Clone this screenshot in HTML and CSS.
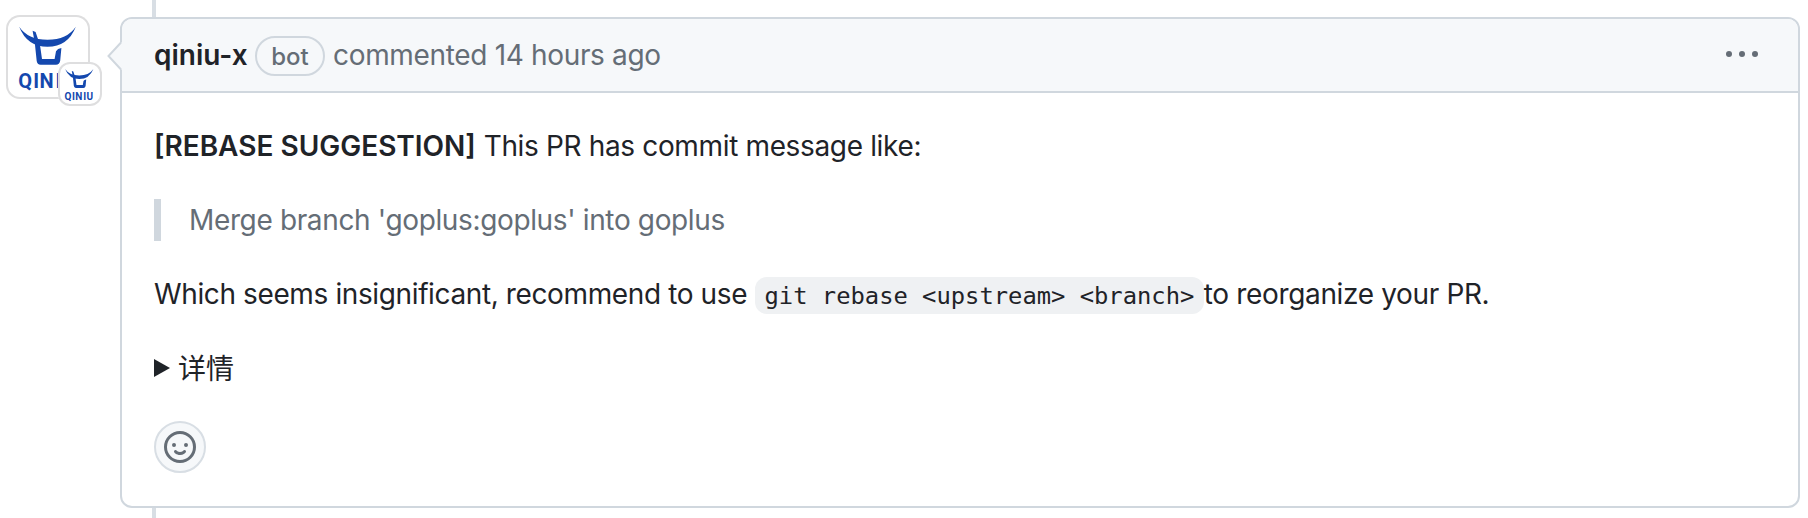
FILE: index.html
```
<!DOCTYPE html>
<html lang="zh-CN">
<head>
<meta charset="utf-8">
<title>qiniu-x commented</title>
<link rel="stylesheet" href="styles.css">
</head>
<body>
<svg class="defs" width="0" height="0">
  <symbol id="logo" viewBox="0 0 84 84">
    <path d="M13.2 11.8 Q22 24.8 41.5 24.8 Q61 24.8 69.8 11.8 Q62 31.8 41.5 31.8 Q21 31.8 13.2 11.8Z"/>
    <path d="M26.6 15.8 L29.6 17 L34 30 L36 44 H48.6 L50 36.2 Q51.5 33.4 55.4 33 L54.2 45.8 Q53.4 49.8 50 49.8 H34.6 Q31.2 49.6 30.7 46 L28.8 28Z"/>
    <text class="logo-text" x="12.2 27.2 33.6 49.4 56.2" y="73">QINIU</text>
  </symbol>
</svg>
<main class="timeline">
  <div class="avatars">
    <svg class="avatar" viewBox="0 0 84 84"><use href="#logo" width="84" height="84"/></svg>
    <svg class="avatar-small" viewBox="0 0 44 44"><use href="#logo" x="0.5" y="1" width="42" height="42"/></svg>
  </div>
  <article class="comment">
    <svg class="caret" width="15" height="30" viewBox="0 0 15 30"><path class="caret-fill" d="M15 1 L1.5 15 L15 29Z"/><path class="caret-line" d="M14 1.5 L1.5 15 L14 28.5"/></svg>
    <header class="header">
      <strong class="author">qiniu-x</strong>
      <span class="badge">bot</span>
      <span class="meta">commented 14 hours ago</span>
      <svg class="menu" width="32" height="32" viewBox="0 0 16 16"><circle cx="1.5" cy="8" r="1.5"/><circle cx="8" cy="8" r="1.5"/><circle cx="14.5" cy="8" r="1.5"/></svg>
    </header>
    <div class="body">
      <p class="line"><strong class="tag">[REBASE SUGGESTION]</strong> <span class="intro">This PR has commit message like:</span></p>
      <blockquote class="quote">Merge branch 'goplus:goplus' into goplus</blockquote>
      <p class="line"><span class="advice">Which seems insignificant, recommend to use</span> <code class="code">git rebase &lt;upstream&gt; &lt;branch&gt;</code><span class="ending">to reorganize your PR.</span></p>
      <div class="details"><svg class="arrow" width="16" height="20" viewBox="0 0 16 20"><path d="M0 1 L16 10 L0 19Z"/></svg><span class="summary">详情</span></div>
      <div class="reaction"><svg width="32" height="32" viewBox="0 0 16 16"><path d="M8 0a8 8 0 1 1 0 16A8 8 0 0 1 8 0ZM1.5 8a6.5 6.5 0 1 0 13 0 6.5 6.5 0 0 0-13 0Zm3.82 1.636a.75.75 0 0 1 1.038.175l.007.009c.103.118.22.222.35.31.264.178.683.37 1.285.37.602 0 1.02-.192 1.285-.371.13-.088.247-.192.35-.31l.007-.008a.75.75 0 0 1 1.222.87l-.022-.015c.02.013.021.015.021.015v.001l-.001.002-.002.003-.005.007-.014.019a2.066 2.066 0 0 1-.184.213c-.16.166-.338.316-.53.445-.63.418-1.37.638-2.127.629-.946 0-1.652-.308-2.126-.63a3.331 3.331 0 0 1-.715-.657l-.014-.02-.005-.006-.002-.003v-.002h-.001l.613-.432-.614.43a.75.75 0 0 1 .183-1.044ZM12 7a1 1 0 1 1-2 0 1 1 0 0 1 2 0ZM5 8a1 1 0 1 1 0-2 1 1 0 0 1 0 2Z"/></svg></div>
    </div>
  </article>
</main>
</body>
</html>
```
FILE: styles.css
```
* { box-sizing: border-box; }
body {
  margin: 0;
  background: #fff;
  color: #1f2328;
  font: 28px/42px Inter, "Noto Sans CJK SC", sans-serif;
}
.defs { position: absolute; }
.timeline {
  display: flex;
  height: 518px;
  padding: 17px 8px 10px 6px;
  background: linear-gradient(#d8dee4, #d8dee4) 152px 0 / 4px 100% no-repeat;
}
.avatars { position: relative; flex: 0 0 114px; margin-top: -2px; }
.avatar, .avatar-small {
  display: block;
  background: #fff;
  fill: #1448ae;
  box-shadow: 0 0 0 2px #dededf inset;
}
.avatar { width: 84px; height: 84px; border-radius: 14px; }
.avatar-small {
  position: absolute;
  left: 52px;
  top: 47px;
  width: 44px;
  height: 44px;
  border-radius: 12px;
}
.logo-text { font: 700 20px Roboto, sans-serif; }
.comment {
  position: relative;
  flex: 1;
  border: 2px solid #d0d7de;
  border-radius: 12px;
  background: #fff;
}
.caret { position: absolute; left: -15px; top: 22px; }
.caret-fill { fill: #f6f8fa; }
.caret-line { fill: none; stroke: #d0d7de; stroke-width: 2; }
.header {
  display: flex;
  align-items: center;
  height: 74px;
  padding: 0 40px 0 32px;
  background: #f6f8fa;
  border-bottom: 2px solid #d0d7de;
  border-radius: 10px 10px 0 0;
  color: #656d76;
  white-space: nowrap;
}
.author { color: #1f2328; font-weight: 600; width: 101px; }
.meta { letter-spacing: -0.33px; }
.badge {
  width: 70px;
  height: 40px;
  margin: 2px 8px 0 0;
  border: 2px solid #d0d7de;
  border-radius: 20px;
  font-size: 24px;
  font-weight: 500;
  line-height: 37px;
  text-align: center;
}
.menu { margin: -2px 0 0 auto; fill: #656d76; }
.body {
  display: flex;
  flex-direction: column;
  gap: 32px;
  padding: 32px;
  white-space: nowrap;
}
.line, .quote { margin: 0; height: 42px; }
.tag { font-weight: 600; }
.intro { letter-spacing: -0.35px; }
.advice { letter-spacing: -0.38px; }
.ending { letter-spacing: -0.35px; }
.quote {
  padding-left: 28px;
  border-left: 7px solid #d0d7de;
  color: #656d76;
  letter-spacing: -0.36px;
}
.code {
  padding: 4.76px 9.5px;
  border-radius: 12px;
  background: #eff1f3;
  font: 23.8px "DejaVu Sans Mono", monospace;
  vertical-align: 0.5px;
}
.details { display: flex; align-items: center; gap: 8px; height: 42px; }
.summary { padding-top: 2px; }
.arrow { fill: #1f2328; }
.reaction {
  display: flex;
  align-items: center;
  justify-content: center;
  width: 52px;
  height: 52px;
  border: 2px solid #d8dee4;
  border-radius: 50%;
  background: #f6f8fa;
  fill: #656d76;
}
```
